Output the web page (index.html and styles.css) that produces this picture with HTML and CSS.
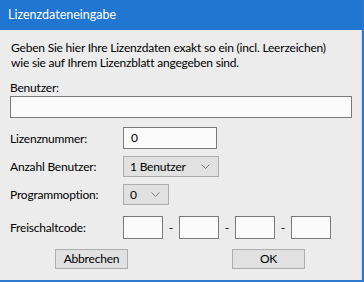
FILE: index.html
```html
<!DOCTYPE html>
<html lang="de">
<head>
  <meta charset="UTF-8">
  <title>Lizenzdateneingabe</title>
  <link rel="stylesheet" href="styles.css">
</head>
<body>
  <div class="window">
    <div class="titlebar">Lizenzdateneingabe</div>

    <div class="content">
      <p class="intro">Geben Sie hier Ihre Lizenzdaten exakt so ein (incl. Leerzeichen)<br>wie sie auf Ihrem Lizenzblatt angegeben sind.</p>

      <div class="label-top">Benutzer:</div>
      <div class="field field-user"></div>

      <div class="row row-nr">
        <span class="label">Lizenznummer:</span>
        <div class="field field-nr">0</div>
      </div>

      <div class="row row-count">
        <span class="label">Anzahl Benutzer:</span>
        <div class="combo combo-count">
          <span>1 Benutzer</span>
          <svg class="chev" viewBox="0 0 9 5" width="9" height="5"><polyline points="0.5,0.5 4.5,4.5 8.5,0.5" fill="none" stroke="#7a7a7a" stroke-width="1"/></svg>
        </div>
      </div>

      <div class="row row-option">
        <span class="label">Programmoption:</span>
        <div class="combo combo-option">
          <span>0</span>
          <svg class="chev" viewBox="0 0 9 5" width="9" height="5"><polyline points="0.5,0.5 4.5,4.5 8.5,0.5" fill="none" stroke="#7a7a7a" stroke-width="1"/></svg>
        </div>
      </div>

      <div class="row row-code">
        <span class="label">Freischaltcode:</span>
        <div class="code">
          <div class="field code-box"></div>
          <span class="dash">-</span>
          <div class="field code-box"></div>
          <span class="dash">-</span>
          <div class="field code-box"></div>
          <span class="dash">-</span>
          <div class="field code-box"></div>
        </div>
      </div>

      <div class="buttons">
        <div class="btn btn-cancel">Abbrechen</div>
        <div class="btn btn-ok">OK</div>
      </div>
    </div>
  </div>
</body>
</html>
```

FILE: styles.css
```css
body {
  margin: 0;
  font-family: Lato, 'Liberation Sans', sans-serif;
  font-size: 12px;
  color: #000;
  background-color: #ececec;
}

.window {
  width: 362px;
  height: 280px;
  border-right: 2px solid #2f78cf;
  border-bottom: 2px solid #2f78cf;
  background-color: #ececec;
  display: flex;
  flex-direction: column;
  box-sizing: content-box;
}

.titlebar {
  height: 30px;
  flex: none;
  background-color: #2176d2;
  color: #fff;
  font-size: 12.5px;
  line-height: 30px;
  padding-left: 8px;
}

.content {
  padding: 10px 10px 0 10px;
  border-right: 1px solid #d4d9df;
  flex: 1;
  white-space: nowrap;
  letter-spacing: -0.2px;
}

.intro {
  margin: 0 0 0 1px;
  line-height: 15px;
}

.label-top {
  margin-top: 10px;
  line-height: 15px;
}

.field {
  background-color: #fbfbfb;
  border: 1px solid #7a7a7a;
  box-sizing: border-box;
}

.field-user {
  width: 342px;
  height: 22px;
  margin-top: 1px;
}

.row {
  display: flex;
  align-items: center;
}

.label {
  width: 113px;
}

.row-nr {
  margin-top: 9px;
}

.field-nr {
  width: 94px;
  height: 22px;
  padding-left: 7px;
  line-height: 20px;
}

.combo {
  display: flex;
  align-items: center;
  justify-content: space-between;
  box-sizing: border-box;
  height: 21px;
  padding: 0 8px 0 6px;
  background-color: #e1e1e1;
  border: 1px solid #adadad;
}

.row-count {
  margin-top: 7px;
}

.combo-count {
  width: 96px;
}

.row-option {
  margin-top: 7px;
}

.combo-option {
  width: 46px;
}

.row-code {
  margin-top: 11px;
}

.code {
  display: flex;
  align-items: center;
}

.code-box {
  width: 40px;
  height: 23px;
}

.dash {
  width: 16px;
  text-align: center;
}

.buttons {
  display: flex;
  margin-top: 10px;
  padding-left: 45px;
  gap: 104px;
}

.btn {
  width: 73px;
  height: 20px;
  box-sizing: border-box;
  background-color: #e1e1e1;
  border: 1px solid #adadad;
  text-align: center;
  line-height: 18px;
}
```
